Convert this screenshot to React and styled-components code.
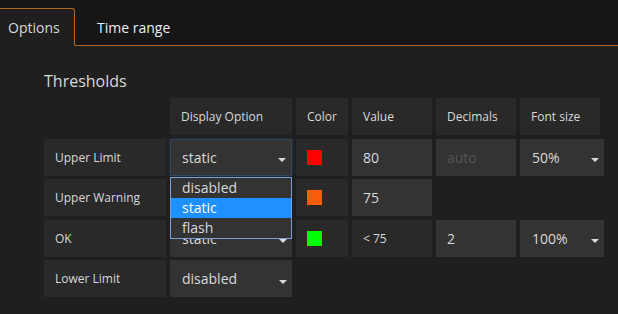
import React from 'react';
import styled, { createGlobalStyle, css } from 'styled-components';

const GlobalStyle = createGlobalStyle`
  html, body {
    margin: 0;
    background: #1f1f1f;
  }
  body {
    font-family: "Open Sans", "Liberation Sans", sans-serif;
    color: #d8d9da;
  }
`;

const ACCENT = '#b3661c';

const Page = styled.div`
  width: 618px;
  height: 314px;
  overflow: hidden;
  background: #1f1f1f;
`;

const TabBar = styled.div`
  display: flex;
  align-items: flex-end;
  height: 46px;
  box-sizing: border-box;
  background: #161616;
  border-bottom: 1px solid ${ACCENT};
`;

const Tab = styled.div`
  height: 38px;
  box-sizing: border-box;
  display: flex;
  align-items: center;
  font-size: 14px;
  margin-bottom: -1px;
  ${(p) =>
    p.$active
      ? css`
          width: 75px;
          padding-left: 8px;
          background: #1f1f1f;
          border: 1px solid ${ACCENT};
          border-left: none;
          border-bottom-color: #1f1f1f;
          border-top-right-radius: 3px;
          color: #d8d9da;
        `
      : css`
          padding: 0 22px;
          color: #e9edf2;
        `}
`;

const Section = styled.section`
  padding: 25px 0 0 44px;
`;

const Title = styled.h5`
  margin: 0 0 7px;
  font-size: 16px;
  line-height: 20px;
  font-weight: 400;
  color: #d8d9da;
`;

const Grid = styled.div`
  display: grid;
  grid-template-columns: 122px 122px 52px 80px 80px 84px;
  grid-auto-rows: 37px;
  column-gap: 4px;
  row-gap: 3.5px;
`;

const Cell = styled.div`
  display: flex;
  align-items: center;
  box-sizing: border-box;
  padding: 0 11px;
  background: #292929;
  font-size: 12px;
  color: #d8d9da;
  white-space: nowrap;
  ${(p) => p.$col && css`grid-column: ${p.$col};`}
  ${(p) => p.$w && css`width: ${p.$w}px;`}
`;

const Input = styled.input`
  box-sizing: border-box;
  width: 100%;
  height: 100%;
  margin: 0;
  padding: 0 11px;
  border: none;
  outline: none;
  background: #333333;
  font-family: inherit;
  font-size: 14px;
  color: #d8d9da;
  &::placeholder {
    color: #555555;
  }
`;

const Select = styled.div`
  position: relative;
  display: flex;
  align-items: center;
  box-sizing: border-box;
  padding: 0 12px;
  background: #333333;
  font-size: 14px;
  color: #d8d9da;
  ${(p) =>
    p.$focus &&
    css`
      border: 1px solid #33475c;
      padding-left: 11px;
      box-shadow: 0 0 4px rgba(60, 110, 170, 0.35);
    `}
`;

const Caret = styled.span`
  position: absolute;
  right: 5px;
  top: 50%;
  margin-top: 1px;
  width: 0;
  height: 0;
  border-left: 4px solid transparent;
  border-right: 4px solid transparent;
  border-top: 4px solid #d8d9da;
`;

const Menu = styled.ul`
  position: absolute;
  z-index: 2;
  top: 37px;
  left: -1px;
  width: 122px;
  box-sizing: border-box;
  margin: 0;
  padding: 0;
  list-style: none;
  border: 1px solid #7a9fdc;
  background: #333333;
`;

const MenuItem = styled.li`
  height: 20px;
  line-height: 20px;
  padding-left: 11px;
  font-size: 14px;
  color: ${(p) => (p.$selected ? '#ffffff' : '#d8d9da')};
  background: ${(p) => (p.$selected ? '#1e90ff' : 'transparent')};
`;

const Swatch = styled.span`
  width: 15px;
  height: 15px;
  background: ${(p) => p.$color};
`;

function Dropdown({ value, open, focus, options }) {
  return (
    <Select $focus={focus}>
      {value}
      <Caret />
      {open && (
        <Menu>
          {options.map((o) => (
            <MenuItem key={o} $selected={o === value}>
              {o}
            </MenuItem>
          ))}
        </Menu>
      )}
    </Select>
  );
}

const modes = ['disabled', 'static', 'flash'];

export default function App() {
  return (
    <Page>
      <GlobalStyle />
      <TabBar>
        <Tab $active>Options</Tab>
        <Tab>Time range</Tab>
      </TabBar>
      <Section>
        <Title>Thresholds</Title>
        <Grid>
          <Cell $col={2}>Display Option</Cell>
          <Cell>Color</Cell>
          <Cell>Value</Cell>
          <Cell>Decimals</Cell>
          <Cell $w={80}>Font size</Cell>

          <Cell>Upper Limit</Cell>
          <Dropdown value="static" focus open options={modes} />
          <Cell><Swatch $color="#ff0000" /></Cell>
          <Input readOnly defaultValue="80" />
          <Input readOnly placeholder="auto" />
          <Dropdown value="50%" />

          <Cell>Upper Warning</Cell>
          <Dropdown value="static" />
          <Cell><Swatch $color="#fa5c0c" /></Cell>
          <Input readOnly defaultValue="75" />
          <div />
          <div />

          <Cell>OK</Cell>
          <Dropdown value="static" />
          <Cell><Swatch $color="#00ff00" /></Cell>
          <Cell>&lt; 75</Cell>
          <Input readOnly defaultValue="2" />
          <Dropdown value="100%" />

          <Cell>Lower Limit</Cell>
          <Dropdown value="disabled" />
        </Grid>
      </Section>
    </Page>
  );
}
